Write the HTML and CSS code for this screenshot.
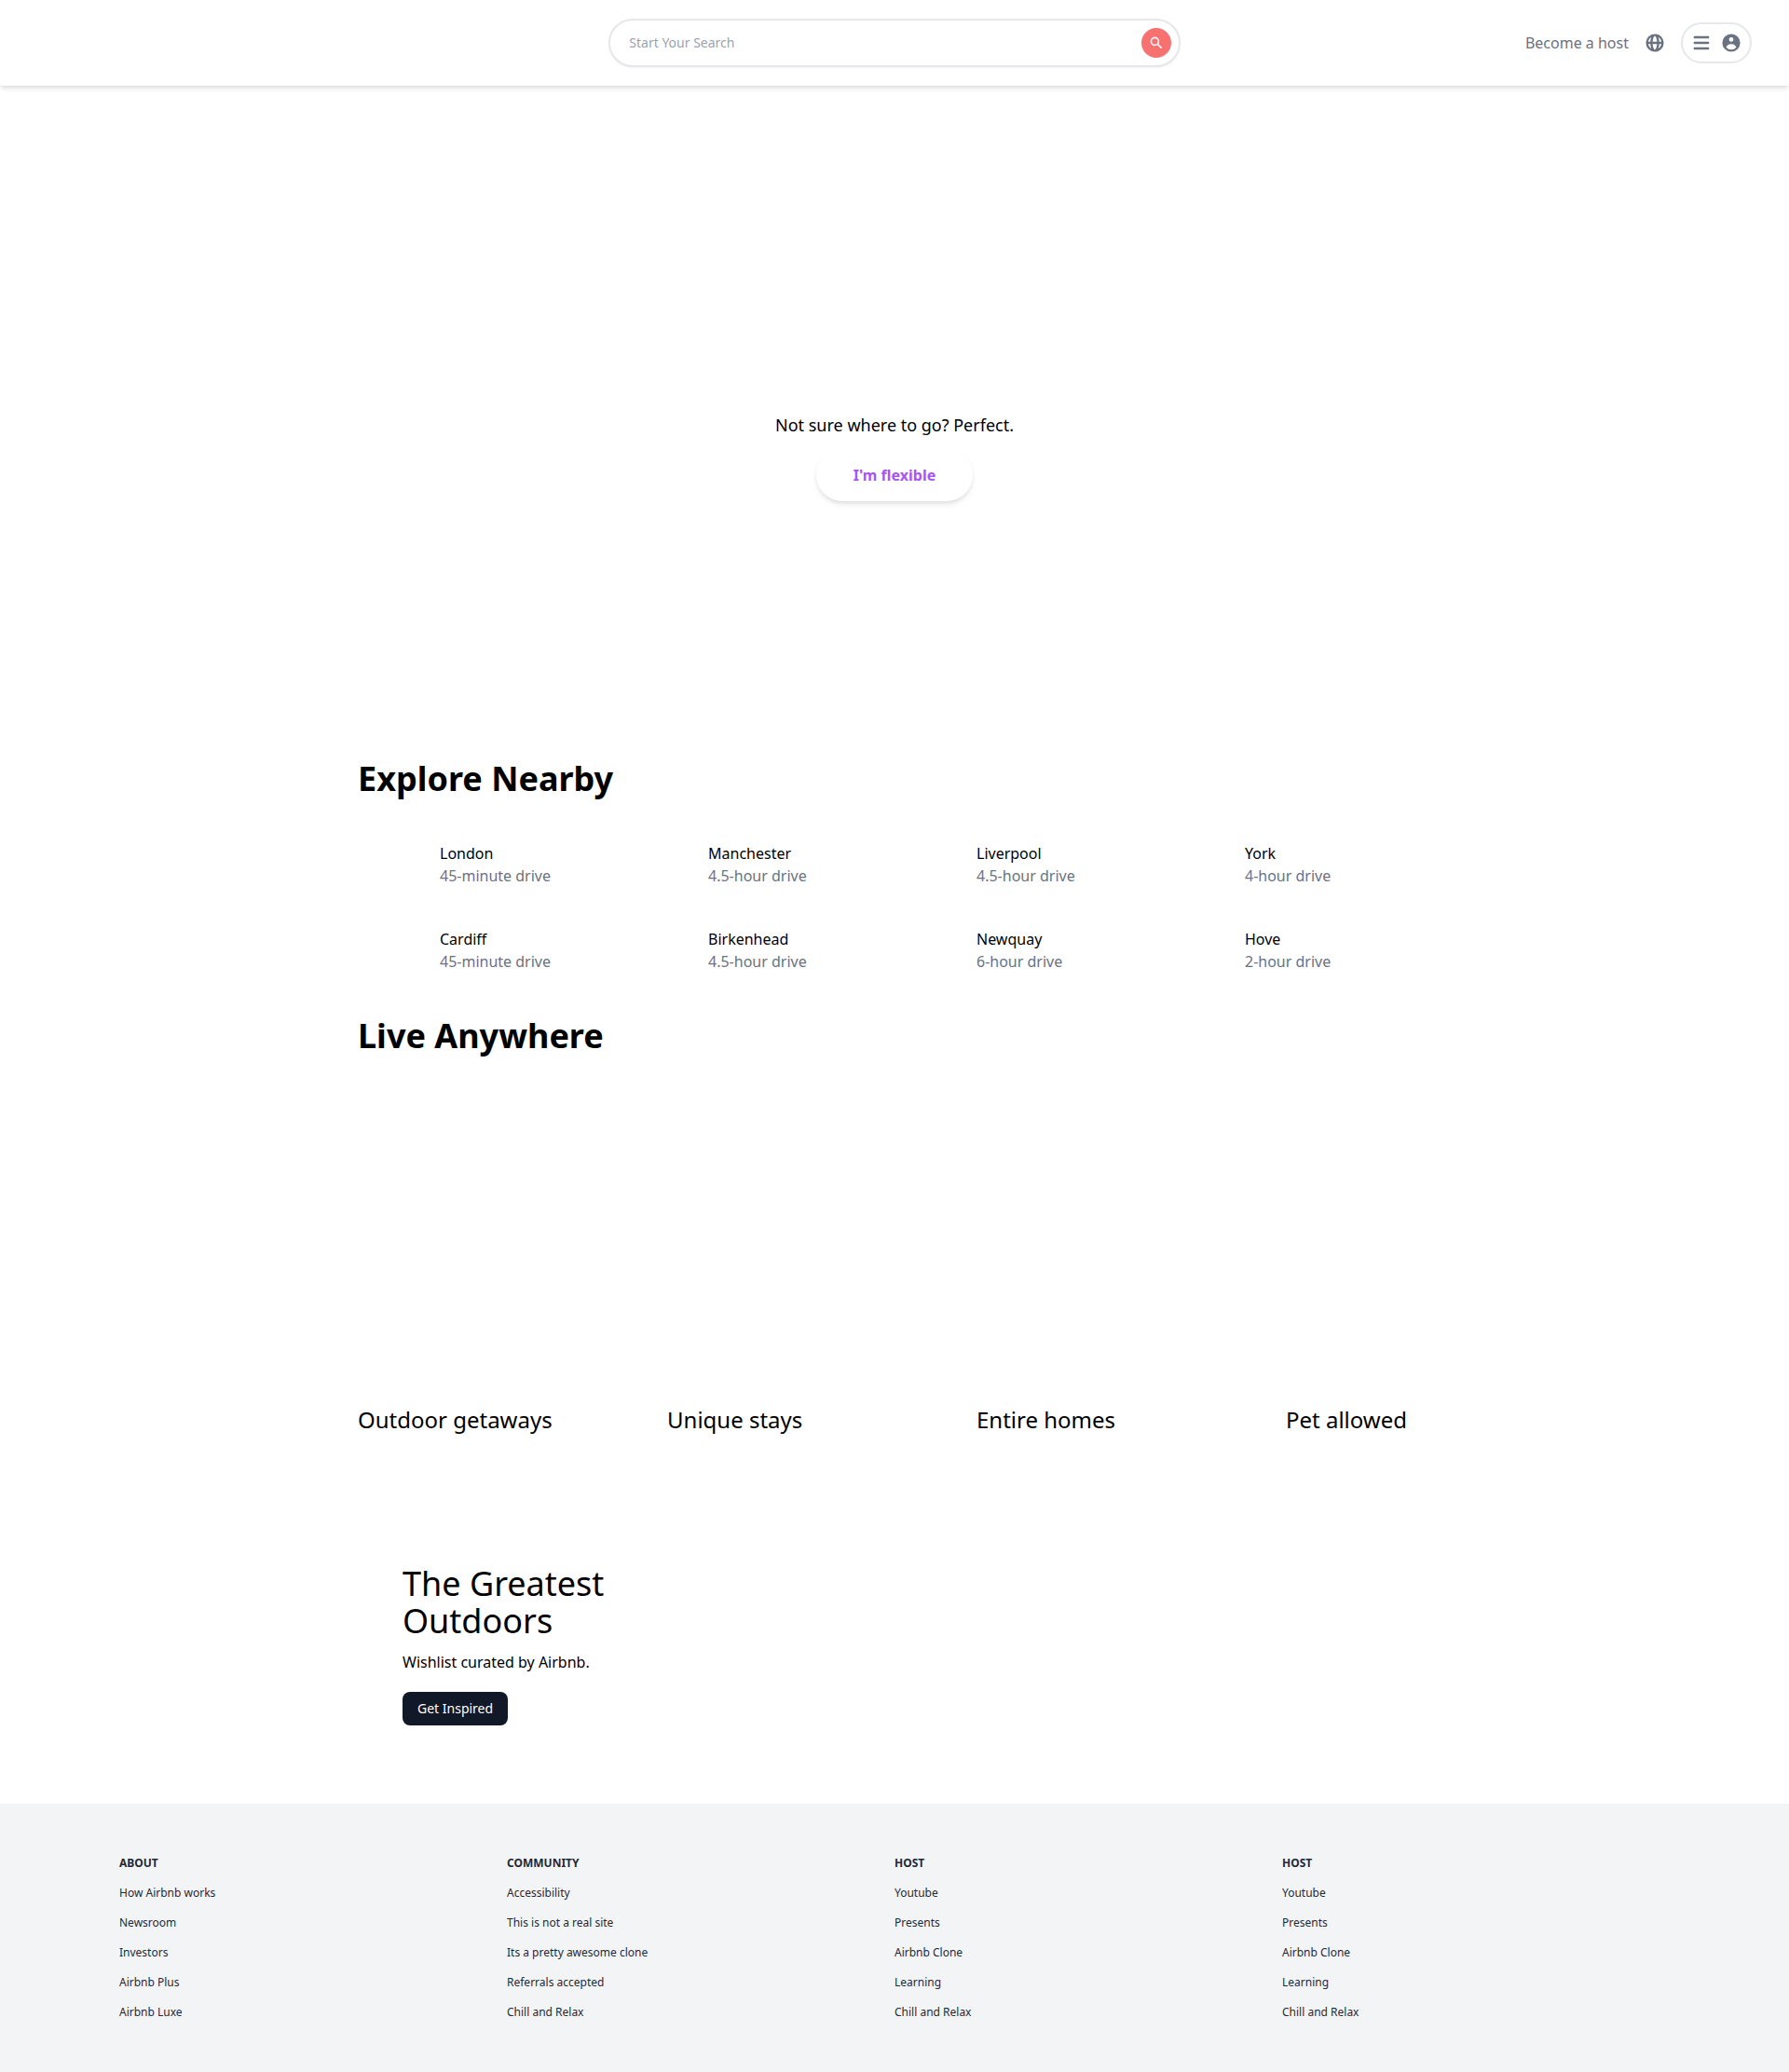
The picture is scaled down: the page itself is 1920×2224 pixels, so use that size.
FILE: index.html
```html
<!DOCTYPE html>
<html lang="en">
<head>
<meta charset="utf-8">
<title>Airbnb Clone</title>
<link rel="stylesheet" href="styles.css">
</head>
<body>
<header class="header">
  <div class="logo"></div>
  <div class="search">
    <input class="search-input" type="text" placeholder="Start Your Search">
    <svg class="search-icon" viewBox="0 0 20 20" fill="currentColor"><path fill-rule="evenodd" clip-rule="evenodd" d="M8 4a4 4 0 100 8 4 4 0 000-8zM2 8a6 6 0 1110.89 3.476l4.817 4.817a1 1 0 01-1.414 1.414l-4.816-4.816A6 6 0 012 8z"/></svg>
  </div>
  <div class="actions">
    <p>Become a host</p>
    <svg class="icon" viewBox="0 0 20 20" fill="currentColor"><path fill-rule="evenodd" clip-rule="evenodd" d="M4.083 9h1.946c.089-1.546.383-2.97.837-4.118A6.004 6.004 0 004.083 9zM10 2a8 8 0 100 16 8 8 0 000-16zm0 2c-.076 0-.232.032-.465.262-.238.234-.497.623-.737 1.182-.389.907-.673 2.142-.766 3.556h3.936c-.093-1.414-.377-2.649-.766-3.556-.24-.56-.5-.948-.737-1.182C10.232 4.032 10.076 4 10 4zm3.971 5c-.089-1.546-.383-2.97-.837-4.118A6.004 6.004 0 0115.917 9h-1.946zm-2.003 2H8.032c.093 1.414.377 2.649.766 3.556.24.56.5.948.737 1.182.233.23.389.262.465.262.076 0 .232-.032.465-.262.238-.234.498-.623.737-1.182.389-.907.673-2.142.766-3.556zm1.166 4.118c.454-1.147.748-2.572.837-4.118h1.946a6.004 6.004 0 01-2.783 4.118zm-6.268 0C6.412 13.97 6.118 12.546 6.03 11H4.083a6.004 6.004 0 002.783 4.118z"/></svg>
    <div class="profile">
      <svg class="icon" viewBox="0 0 20 20" fill="currentColor"><path fill-rule="evenodd" clip-rule="evenodd" d="M3 5a1 1 0 011-1h12a1 1 0 110 2H4a1 1 0 01-1-1zM3 10a1 1 0 011-1h12a1 1 0 110 2H4a1 1 0 01-1-1zM3 15a1 1 0 011-1h12a1 1 0 110 2H4a1 1 0 01-1-1z"/></svg>
      <svg class="icon" viewBox="0 0 20 20" fill="currentColor"><path fill-rule="evenodd" clip-rule="evenodd" d="M18 10a8 8 0 11-16 0 8 8 0 0116 0zm-6-3a2 2 0 11-4 0 2 2 0 014 0zm-2 4a5 5 0 00-4.546 2.916A5.986 5.986 0 0010 16a5.986 5.986 0 004.546-2.084A5 5 0 0010 11z"/></svg>
    </div>
  </div>
</header>

<section class="banner">
  <p class="banner-text">Not sure where to go? Perfect.</p>
  <button class="banner-button">I'm flexible</button>
</section>

<main class="main">
  <section class="explore">
    <h2 class="heading">Explore Nearby</h2>
    <div class="places">
      <div class="place"><div><h3>London</h3><p class="distance">45-minute drive</p></div></div>
      <div class="place"><div><h3>Manchester</h3><p class="distance">4.5-hour drive</p></div></div>
      <div class="place"><div><h3>Liverpool</h3><p class="distance">4.5-hour drive</p></div></div>
      <div class="place"><div><h3>York</h3><p class="distance">4-hour drive</p></div></div>
      <div class="place"><div><h3>Cardiff</h3><p class="distance">45-minute drive</p></div></div>
      <div class="place"><div><h3>Birkenhead</h3><p class="distance">4.5-hour drive</p></div></div>
      <div class="place"><div><h3>Newquay</h3><p class="distance">6-hour drive</p></div></div>
      <div class="place"><div><h3>Hove</h3><p class="distance">2-hour drive</p></div></div>
    </div>
  </section>

  <section class="live">
    <h2 class="heading">Live Anywhere</h2>
    <div class="stays">
      <h3 class="stay">Outdoor getaways</h3>
      <h3 class="stay">Unique stays</h3>
      <h3 class="stay">Entire homes</h3>
      <h3 class="stay">Pet allowed</h3>
    </div>
  </section>

  <section class="promo">
    <h3 class="promo-title">The Greatest Outdoors</h3>
    <p>Wishlist curated by Airbnb.</p>
    <button class="promo-button">Get Inspired</button>
  </section>
</main>

<footer class="footer">
  <div class="links"><h5>ABOUT</h5><p>How Airbnb works</p><p>Newsroom</p><p>Investors</p><p>Airbnb Plus</p><p>Airbnb Luxe</p></div>
  <div class="links"><h5>COMMUNITY</h5><p>Accessibility</p><p>This is not a real site</p><p>Its a pretty awesome clone</p><p>Referrals accepted</p><p>Chill and Relax</p></div>
  <div class="links"><h5>HOST</h5><p>Youtube</p><p>Presents</p><p>Airbnb Clone</p><p>Learning</p><p>Chill and Relax</p></div>
  <div class="links"><h5>HOST</h5><p>Youtube</p><p>Presents</p><p>Airbnb Clone</p><p>Learning</p><p>Chill and Relax</p></div>
</footer>
</body>
</html>
```
FILE: styles.css
```css
*, *::before, *::after { box-sizing: border-box; }
body, h2, h3, h5, p { margin: 0; }
h2, h3, h5 { font-size: inherit; font-weight: inherit; }
body {
  font-family: "Noto Sans", sans-serif;
  font-size: 16px;
  line-height: 24px;
  color: #000;
  background: #fff;
}
button, input { font: inherit; border: 0; }
svg { display: block; flex: none; }

.header {
  position: sticky;
  top: 0;
  z-index: 50;
  display: grid;
  grid-template-columns: repeat(3, minmax(0, 1fr));
  height: 92px;
  padding: 20px 40px;
  background: #fff;
  box-shadow: 0 4px 6px -1px rgba(0, 0, 0, .1), 0 2px 4px -1px rgba(0, 0, 0, .06);
}
.search {
  display: flex;
  align-items: center;
  padding: 8px 0;
  border: 2px solid #e5e7eb;
  border-radius: 9999px;
  box-shadow: 0 1px 2px 0 rgba(0, 0, 0, .05);
}
.search-input {
  flex: 1;
  min-width: 0;
  padding: 0 0 0 20px;
  font-size: 14px;
  line-height: 20px;
  color: #4b5563;
  background: transparent;
  outline: none;
}
.search-input::placeholder { color: #9ca3af; opacity: 1; }
.search-icon {
  width: 32px;
  height: 32px;
  margin: 0 8px;
  padding: 8px;
  color: #fff;
  background: #f87171;
  border-radius: 9999px;
}
.actions {
  display: flex;
  align-items: center;
  justify-content: flex-end;
  gap: 16px;
  color: #6b7280;
}
.icon { width: 24px; height: 24px; }
.profile {
  display: flex;
  align-items: center;
  gap: 8px;
  padding: 8px;
  border: 2px solid #e5e7eb;
  border-radius: 9999px;
}

.banner {
  height: 700px;
  padding-top: 350px;
  text-align: center;
}
.banner-text { font-size: 18px; line-height: 28px; }
.banner-button {
  margin: 12px 0;
  padding: 16px 40px;
  font-weight: 700;
  color: #a855f7;
  background: #fff;
  border-radius: 9999px;
  box-shadow: 0 4px 6px -1px rgba(0, 0, 0, .1), 0 2px 4px -1px rgba(0, 0, 0, .06);
}

.main {
  max-width: 1280px;
  margin: 0 auto;
  padding: 0 64px;
}
.heading { font-size: 36px; line-height: 40px; font-weight: 700; }
.explore { padding-top: 24px; }
.explore .heading { padding-bottom: 20px; }
.places { display: grid; grid-template-columns: repeat(4, minmax(0, 1fr)); }
.place {
  display: flex;
  align-items: center;
  height: 64px;
  margin: 20px 8px 8px;
  padding-left: 80px;
}
.distance { color: #6b7280; }

.live { padding-top: 32px; }
.stays {
  display: flex;
  gap: 12px;
  padding-top: 44px;
  overflow: hidden;
}
.stay {
  flex: none;
  width: 320px;
  padding-top: 332px;
  font-size: 24px;
  line-height: 32px;
}

.promo { padding: 140px 48px 84px; }
.promo-title {
  width: 256px;
  margin-bottom: 12px;
  font-size: 36px;
  line-height: 40px;
}
.promo-button {
  display: block;
  margin-top: 20px;
  padding: 8px 16px;
  font-size: 14px;
  line-height: 20px;
  color: #fff;
  background: #111827;
  border-radius: 8px;
}

.footer {
  display: grid;
  grid-template-columns: repeat(4, minmax(0, 1fr));
  padding: 56px 128px;
  color: #1f2937;
  background: #f3f4f6;
}
.links {
  display: flex;
  flex-direction: column;
  gap: 16px;
  font-size: 12px;
  line-height: 16px;
}
.links h5 { font-weight: 700; }
```
